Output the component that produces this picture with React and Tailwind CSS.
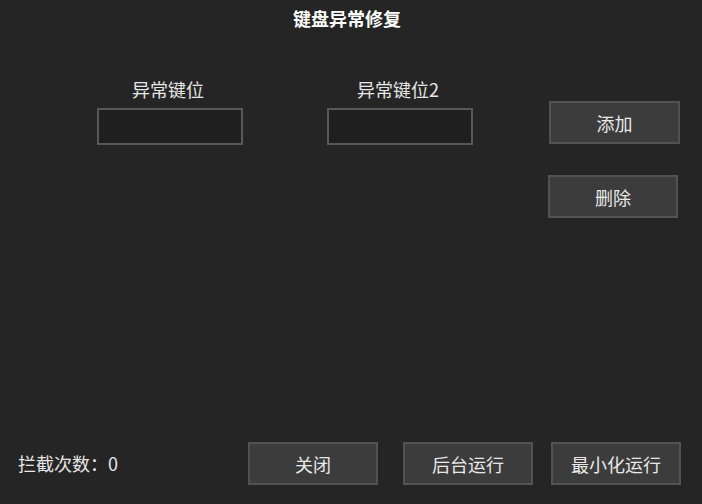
import React from 'react';

const font = { fontFamily: '"Noto Sans CJK SC", "Liberation Sans", sans-serif' };

function Btn({ children, className = '' }) {
  return (
    <button
      className={`h-[43px] w-[130px] border-2 border-[#525252] bg-[#3c3c3c] text-[18px] leading-none text-[#e8e8e8] flex items-center justify-center ${className}`}
    >
      {children}
    </button>
  );
}

function KeyField({ label }) {
  return (
    <div className="flex w-[146px] flex-col items-center">
      <div className="h-[18px] pr-[4px] text-[18px] leading-[18px] text-[#e6e6e6]">{label}</div>
      <input
        className="mt-[10px] h-[37px] w-full border-2 border-[#585858] bg-[#1f1f1f] text-[#e6e6e6] outline-none"
        readOnly
      />
    </div>
  );
}

export default function App() {
  return (
    <div className="flex h-[504px] w-[702px] flex-col bg-[#252525]" style={font}>
      {/* Title */}
      <div className="flex h-[36px] items-center justify-center pr-[8px] text-[18px] font-bold text-white">
        键盘异常修复
      </div>

      {/* Key fields + side buttons */}
      <div className="mt-[44px] flex items-start pl-[97px]">
        <KeyField label="异常键位" />
        <div className="ml-[84px]">
          <KeyField label="异常键位2" />
        </div>
        <div className="ml-[75px] mt-[21px] flex flex-col">
          <Btn className="ml-[1px] w-[131px]">添加</Btn>
          <Btn className="mt-[31px]">删除</Btn>
        </div>
      </div>

      {/* Footer */}
      <div className="mt-auto mb-[19px] flex items-center pl-[18px]">
        <div className="w-[230px] text-[18px] text-[#e6e6e6]">拦截次数：0</div>
        <Btn>关闭</Btn>
        <Btn className="ml-[25px]">后台运行</Btn>
        <Btn className="ml-[18px]">最小化运行</Btn>
      </div>
    </div>
  );
}
